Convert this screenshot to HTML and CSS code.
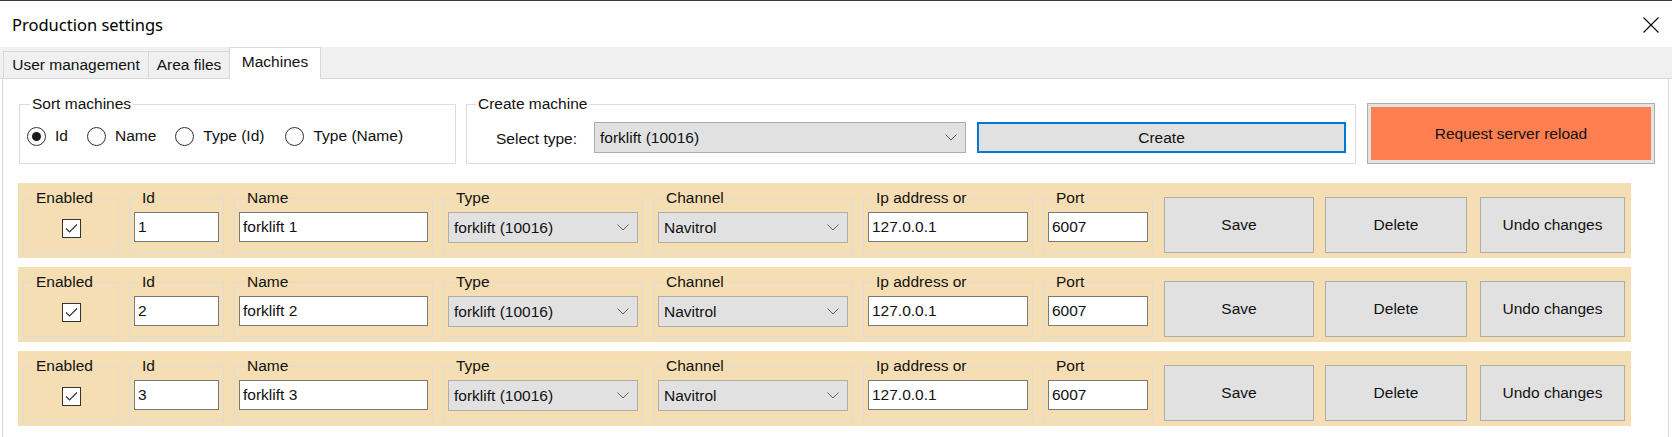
FILE: index.html
```html
<!DOCTYPE html>
<html>
<head>
<meta charset="utf-8">
<link rel="stylesheet" href="styles.css">
</head>
<body>
<div class="window">
  <div class="titlebar">
    <span class="title">Production settings</span>
    <svg class="close" width="16" height="16" viewBox="0 0 16 16"><path d="M0.5 0.5 L15.5 15.5 M15.5 0.5 L0.5 15.5" stroke="#000" stroke-width="1.1" fill="none"/></svg>
  </div>
  <div class="tabstrip">
    <div class="tab tab-users">User management</div>
    <div class="tab tab-area">Area files</div>
    <div class="tab tab-machines active">Machines</div>
  </div>
  <div class="page">
    <div class="toolbar">
      <fieldset class="group sort">
        <legend>Sort machines</legend>
        <div class="radios">
          <label class="radio"><span class="dot checked"></span>Id</label>
          <label class="radio"><span class="dot"></span>Name</label>
          <label class="radio r-typeid"><span class="dot"></span>Type (Id)</label>
          <label class="radio"><span class="dot"></span>Type (Name)</label>
        </div>
      </fieldset>
      <fieldset class="group create">
        <legend>Create machine</legend>
        <div class="create-line">
          <span class="select-label">Select type:</span>
          <div class="combo create-combo"><span>forklift (10016)</span><svg width="12" height="7" viewBox="0 0 12 7"><polyline points="0.5,0.5 6,6 11.5,0.5" fill="none" stroke="#606060" stroke-width="1"/></svg></div>
          <div class="btn create-btn">Create</div>
        </div>
      </fieldset>
      <div class="reload">Request server reload</div>
    </div>

    <div class="rows">
      <div class="row">
        <fieldset class="cell c-enabled"><legend>Enabled</legend><div class="check-wrap"><span class="check"><svg width="19" height="19" viewBox="0 0 19 19"><polyline points="4,9.5 7.5,13 15,5.5" fill="none" stroke="#333" stroke-width="1.2"/></svg></span></div></fieldset>
        <fieldset class="cell c-id"><legend>Id</legend><div class="textbox">1</div></fieldset>
        <fieldset class="cell c-name"><legend>Name</legend><div class="textbox">forklift 1</div></fieldset>
        <fieldset class="cell c-type"><legend>Type</legend><div class="combo"><span>forklift (10016)</span><svg width="12" height="7" viewBox="0 0 12 7"><polyline points="0.5,0.5 6,6 11.5,0.5" fill="none" stroke="#606060" stroke-width="1"/></svg></div></fieldset>
        <fieldset class="cell c-channel"><legend>Channel</legend><div class="combo"><span>Navitrol</span><svg width="12" height="7" viewBox="0 0 12 7"><polyline points="0.5,0.5 6,6 11.5,0.5" fill="none" stroke="#606060" stroke-width="1"/></svg></div></fieldset>
        <fieldset class="cell c-ip"><legend>Ip address or</legend><div class="textbox">127.0.0.1</div></fieldset>
        <fieldset class="cell c-port"><legend>Port</legend><div class="textbox">6007</div></fieldset>
        <div class="btn row-btn b-save">Save</div>
        <div class="btn row-btn b-delete">Delete</div>
        <div class="btn row-btn b-undo">Undo changes</div>
      </div>
      <div class="row">
        <fieldset class="cell c-enabled"><legend>Enabled</legend><div class="check-wrap"><span class="check"><svg width="19" height="19" viewBox="0 0 19 19"><polyline points="4,9.5 7.5,13 15,5.5" fill="none" stroke="#333" stroke-width="1.2"/></svg></span></div></fieldset>
        <fieldset class="cell c-id"><legend>Id</legend><div class="textbox">2</div></fieldset>
        <fieldset class="cell c-name"><legend>Name</legend><div class="textbox">forklift 2</div></fieldset>
        <fieldset class="cell c-type"><legend>Type</legend><div class="combo"><span>forklift (10016)</span><svg width="12" height="7" viewBox="0 0 12 7"><polyline points="0.5,0.5 6,6 11.5,0.5" fill="none" stroke="#606060" stroke-width="1"/></svg></div></fieldset>
        <fieldset class="cell c-channel"><legend>Channel</legend><div class="combo"><span>Navitrol</span><svg width="12" height="7" viewBox="0 0 12 7"><polyline points="0.5,0.5 6,6 11.5,0.5" fill="none" stroke="#606060" stroke-width="1"/></svg></div></fieldset>
        <fieldset class="cell c-ip"><legend>Ip address or</legend><div class="textbox">127.0.0.1</div></fieldset>
        <fieldset class="cell c-port"><legend>Port</legend><div class="textbox">6007</div></fieldset>
        <div class="btn row-btn b-save">Save</div>
        <div class="btn row-btn b-delete">Delete</div>
        <div class="btn row-btn b-undo">Undo changes</div>
      </div>
      <div class="row">
        <fieldset class="cell c-enabled"><legend>Enabled</legend><div class="check-wrap"><span class="check"><svg width="19" height="19" viewBox="0 0 19 19"><polyline points="4,9.5 7.5,13 15,5.5" fill="none" stroke="#333" stroke-width="1.2"/></svg></span></div></fieldset>
        <fieldset class="cell c-id"><legend>Id</legend><div class="textbox">3</div></fieldset>
        <fieldset class="cell c-name"><legend>Name</legend><div class="textbox">forklift 3</div></fieldset>
        <fieldset class="cell c-type"><legend>Type</legend><div class="combo"><span>forklift (10016)</span><svg width="12" height="7" viewBox="0 0 12 7"><polyline points="0.5,0.5 6,6 11.5,0.5" fill="none" stroke="#606060" stroke-width="1"/></svg></div></fieldset>
        <fieldset class="cell c-channel"><legend>Channel</legend><div class="combo"><span>Navitrol</span><svg width="12" height="7" viewBox="0 0 12 7"><polyline points="0.5,0.5 6,6 11.5,0.5" fill="none" stroke="#606060" stroke-width="1"/></svg></div></fieldset>
        <fieldset class="cell c-ip"><legend>Ip address or</legend><div class="textbox">127.0.0.1</div></fieldset>
        <fieldset class="cell c-port"><legend>Port</legend><div class="textbox">6007</div></fieldset>
        <div class="btn row-btn b-save">Save</div>
        <div class="btn row-btn b-delete">Delete</div>
        <div class="btn row-btn b-undo">Undo changes</div>
      </div>
    </div>
  </div>
</div>
</body>
</html>
```

FILE: styles.css
```css
* { box-sizing: border-box; }

html, body {
  margin: 0;
  padding: 0;
}

body {
  width: 1672px;
  height: 437px;
  overflow: hidden;
  background: #ffffff;
  font-family: "Liberation Sans", Arial, sans-serif;
  font-size: 15.5px;
  color: #111;
}

.window {
  height: 437px;
  border-top: 1px solid #3a3a3a;
  display: flex;
  flex-direction: column;
}

.titlebar {
  height: 46px;
  flex: none;
  display: flex;
  align-items: center;
  justify-content: space-between;
  padding: 1px 13px 0 12px;
  background: #fff;
}

.title {
  font-family: "Noto Sans", "Open Sans", sans-serif;
  font-size: 16.5px;
  color: #000;
}

.close { display: block; }

.tabstrip {
  flex: none;
  height: 32px;
  background: #f0f0f0;
  border-bottom: 1px solid #d9d9d9;
  display: flex;
  align-items: flex-end;
  padding-left: 3px;
}

.tab {
  height: 27px;
  border: 1px solid #d9d9d9;
  border-bottom: none;
  margin-left: -1px;
  display: flex;
  align-items: center;
  justify-content: center;
  background: #f0f0f0;
  white-space: nowrap;
}

.tab:first-child { margin-left: 0; }

.tab-users { width: 146px; }
.tab-area { width: 82px; }
.tab-machines { width: 92px; }

.tab.active {
  height: 32px;
  margin-bottom: -1px;
  background: #fff;
  padding-bottom: 3px;
}

.page {
  flex: 1;
  background: #fff;
  margin: 0 3px 0 2px;
  border-left: 1px solid #d9d9d9;
  border-right: 1px solid #d9d9d9;
  padding: 16px 0 0 15px;
}

.toolbar {
  display: flex;
  align-items: flex-end;
  margin-left: 1px;
}

fieldset {
  margin: 0;
  min-width: 0;
  border: 1px solid #dcdcdc;
}

legend {
  line-height: 18px;
  padding: 0 2px;
  white-space: nowrap;
}

.group {
  height: 69px;
  padding: 0;
}

.sort {
  width: 437px;
  padding: 13px 0 0 7px;
}

.sort legend { margin-left: 3px; }

.radios {
  display: flex;
  align-items: center;
  gap: 19px;
  height: 20px;
}

.radio {
  display: flex;
  align-items: center;
  gap: 9px;
  white-space: nowrap;
}

.r-typeid { margin-right: 2px; }

.dot {
  width: 19px;
  height: 19px;
  border: 1px solid #333;
  border-radius: 50%;
  background: #fff;
  display: flex;
  align-items: center;
  justify-content: center;
}

.dot.checked::after {
  content: "";
  width: 9px;
  height: 9px;
  border-radius: 50%;
  background: #1a1a1a;
}

.create {
  width: 890px;
  margin-left: 10px;
  padding: 9px 0 0 4px;
}

.create legend { margin-left: 5px; }

.create-line {
  display: flex;
  align-items: center;
}

.select-label {
  margin-left: 25px;
  width: 98px;
  padding-top: 2px;
}

.combo {
  height: 31px;
  background: #e1e1e1;
  border: 1px solid #adadad;
  display: flex;
  align-items: center;
  justify-content: space-between;
  padding: 0 8px 0 5px;
  white-space: nowrap;
}

.combo svg { display: block; }

.create-combo { width: 372px; }

.btn {
  background: #e1e1e1;
  border: 1px solid #adadad;
  display: flex;
  align-items: center;
  justify-content: center;
  white-space: nowrap;
}

.create-btn {
  width: 369px;
  height: 31px;
  margin-left: 11px;
  border: 2px solid #0078d7;
}

.reload {
  width: 288px;
  height: 61px;
  margin-left: 11px;
  background: #ff7f50;
  border: 1px solid #adadad;
  box-shadow: inset 0 0 0 3px #e3e3e3;
  display: flex;
  align-items: center;
  justify-content: center;
  white-space: nowrap;
}

.rows {
  margin-top: 19px;
  display: flex;
  flex-direction: column;
  gap: 9px;
}

.row {
  width: 1613px;
  height: 75px;
  background: #f5deb3;
  display: flex;
  align-items: flex-end;
  gap: 10px;
  padding: 0 6px 5px 5px;
}

.cell {
  height: 64px;
  padding: 5px 4px 0 4px;
  flex: none;
}

.cell legend { margin-left: 6px; }

.c-enabled { width: 96px; }
.c-id { width: 95px; }
.c-name { width: 199px; }
.c-type { width: 200px; }
.c-channel { width: 200px; }
.c-ip { width: 170px; }
.c-port { width: 110px; }

.textbox {
  height: 30px;
  background: #fff;
  border: 1px solid #7a7a7a;
  display: flex;
  align-items: center;
  padding-left: 3px;
  white-space: nowrap;
  overflow: hidden;
}

.check-wrap {
  display: flex;
  justify-content: center;
  padding-top: 7px;
}

.check {
  width: 19px;
  height: 19px;
  border: 1px solid #333;
  background: #fff;
  display: block;
}

.check svg { display: block; margin: -1px 0 0 -1px; }

.row-btn {
  height: 56px;
  flex: none;
}

.b-save { width: 150px; margin-left: 1px; }
.b-delete { width: 142px; margin-left: 1px; }
.b-undo { width: 145px; margin-left: 3px; }
```
